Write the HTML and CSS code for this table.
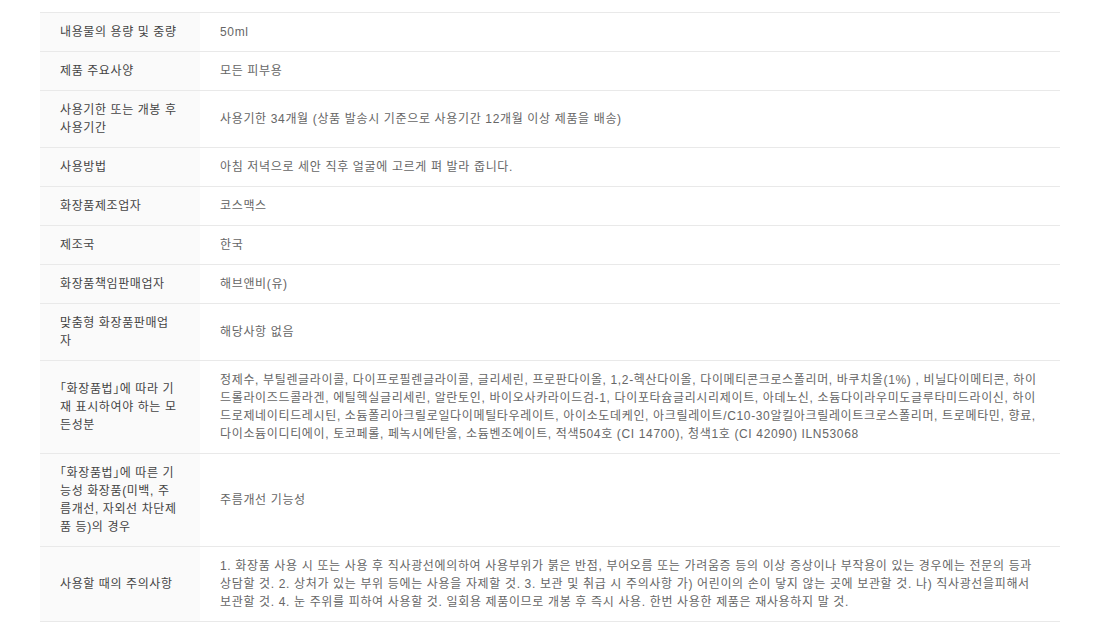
FILE: index.html
```html
<!DOCTYPE html>
<html lang="ko">
<head>
<meta charset="utf-8">
<link rel="stylesheet" href="styles.css">
</head>
<body>
<div class="wrap">
<table class="info">
<tbody>
<tr><th>내용물의 용량 및 중량</th><td>50ml</td></tr>
<tr><th>제품 주요사양</th><td>모든 피부용</td></tr>
<tr><th>사용기한 또는 개봉 후 사용기간</th><td>사용기한 34개월 (상품 발송시 기준으로 사용기간 12개월 이상 제품을 배송)</td></tr>
<tr><th>사용방법</th><td>아침 저녁으로 세안 직후 얼굴에 고르게 펴 발라 줍니다.</td></tr>
<tr><th>화장품제조업자</th><td>코스맥스</td></tr>
<tr><th>제조국</th><td>한국</td></tr>
<tr><th>화장품책임판매업자</th><td>해브앤비(유)</td></tr>
<tr><th>맞춤형 화장품판매업자</th><td>해당사항 없음</td></tr>
<tr><th>「화장품법」에 따라 기재 표시하여야 하는 모든성분</th><td>정제수, 부틸렌글라이콜, 다이프로필렌글라이콜, 글리세린, 프로판다이올, 1,2-헥산다이올, 다이메티콘크로스폴리머, 바쿠치올(1%) , 비닐다이메티콘, 하이드롤라이즈드콜라겐, 에틸헥실글리세린, 알란토인, 바이오사카라이드검-1, 다이포타슘글리시리제이트, 아데노신, 소듐다이라우미도글루타미드라이신, 하이드로제네이티드레시틴, 소듐폴리아크릴로일다이메틸타우레이트, 아이소도데케인, 아크릴레이트/C10-30알킬아크릴레이트크로스폴리머, 트로메타민, 향료, 다이소듐이디티에이, 토코페롤, 페녹시에탄올, 소듐벤조에이트, 적색504호 (CI 14700), 청색1호 (CI 42090) ILN53068</td></tr>
<tr><th>「화장품법」에 따른 기능성 화장품(미백, 주름개선, 자외선 차단제품 등)의 경우</th><td>주름개선 기능성</td></tr>
<tr><th>사용할 때의 주의사항</th><td>1. 화장품 사용 시 또는 사용 후 직사광선에의하여 사용부위가 붉은 반점, 부어오름 또는 가려움증 등의 이상 증상이나 부작용이 있는 경우에는 전문의 등과 상담할 것. 2. 상처가 있는 부위 등에는 사용을 자제할 것. 3. 보관 및 취급 시 주의사항 가) 어린이의 손이 닿지 않는 곳에 보관할 것. 나) 직사광선을피해서 보관할 것. 4. 눈 주위를 피하여 사용할 것. 일회용 제품이므로 개봉 후 즉시 사용. 한번 사용한 제품은 재사용하지 말 것.</td></tr>
</tbody>
</table>
</div>
</body>
</html>
```
FILE: styles.css
```css
html, body {
  margin: 0;
  padding: 0;
  background: #fff;
}
.wrap {
  padding: 12px 50px 0 40px;
}
.info {
  width: 1020px;
  border-collapse: collapse;
  table-layout: fixed;
  font-family: "Liberation Sans", "Noto Sans CJK KR", sans-serif;
  font-size: 12px;
  line-height: 18px;
  border-top: 1px solid #e9e9e9;
}
.info th,
.info td {
  border-bottom: 1px solid #e9e9e9;
  padding: 10px 20px;
  vertical-align: middle;
  text-align: left;
  word-break: break-all;
}
.info th {
  width: 120px;
  background: #fafafa;
  font-weight: normal;
  color: #444;
  letter-spacing: 0.6px;
  font-feature-settings: "halt" 1;
}
.info td {
  color: #666;
  letter-spacing: 0.65px;
}
```
